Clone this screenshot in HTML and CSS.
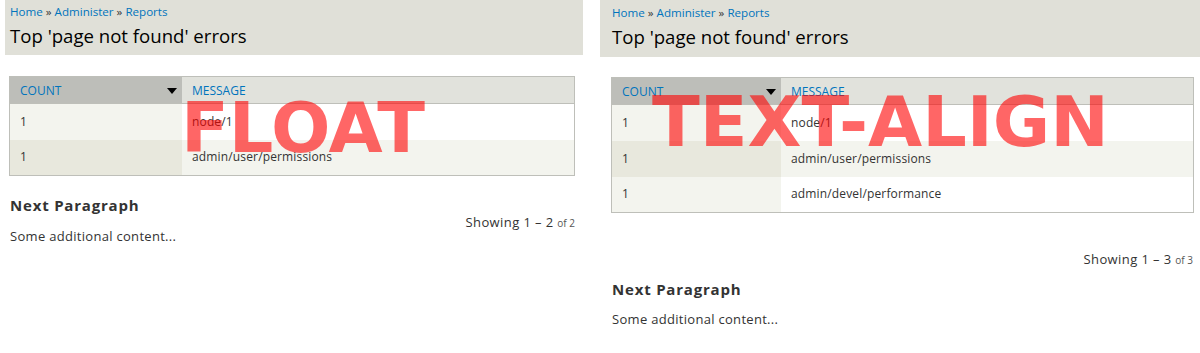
FILE: index.html
```html
<!DOCTYPE html>
<html lang="en">
<head>
    <meta charset="UTF-8">
    <meta name="viewport" content="width=device-width, initial-scale=1.0">
    <title>Top 'page not found' errors</title>
    <link rel="stylesheet" href="styles.css">
</head>
<body>
    <div class="shots">

        <!-- float version -->
        <div class="shot shot-float">
            <div class="page-header">
                <div class="breadcrumb"><a href="#">Home</a> » <a href="#">Administer</a> » <a href="#">Reports</a></div>
                <h1>Top 'page not found' errors</h1>
            </div>

            <table class="report">
                <thead>
                    <tr>
                        <th class="active"><a href="#">COUNT</a>
                            <svg class="sort" width="10" height="6" viewBox="0 0 10 6"><path d="M0 0h10L5 6z"/></svg>
                        </th>
                        <th><a href="#">MESSAGE</a></th>
                    </tr>
                </thead>
                <tbody>
                    <tr class="odd"><td class="active">1</td><td>node/1</td></tr>
                    <tr class="even"><td class="active">1</td><td>admin/user/permissions</td></tr>
                </tbody>
            </table>

            <div class="after">
                <div class="pager pager-float">Showing 1 – 2 <small>of 2</small></div>
                <h3>Next Paragraph</h3>
                <p>Some additional content...</p>
            </div>

            <div class="label label-float">FLOAT</div>
        </div>

        <!-- text-align version -->
        <div class="shot shot-align">
            <div class="page-header">
                <div class="breadcrumb"><a href="#">Home</a> » <a href="#">Administer</a> » <a href="#">Reports</a></div>
                <h1>Top 'page not found' errors</h1>
            </div>

            <table class="report">
                <thead>
                    <tr>
                        <th class="active"><a href="#">COUNT</a>
                            <svg class="sort" width="10" height="6" viewBox="0 0 10 6"><path d="M0 0h10L5 6z"/></svg>
                        </th>
                        <th><a href="#">MESSAGE</a></th>
                    </tr>
                </thead>
                <tbody>
                    <tr class="odd"><td class="active">1</td><td>node/1</td></tr>
                    <tr class="even"><td class="active">1</td><td>admin/user/permissions</td></tr>
                    <tr class="odd"><td class="active">1</td><td>admin/devel/performance</td></tr>
                </tbody>
            </table>

            <div class="pager pager-align">Showing 1 – 3 <small>of 3</small></div>
            <h3>Next Paragraph</h3>
            <p>Some additional content...</p>

            <div class="label label-align">TEXT-ALIGN</div>
        </div>

    </div>
</body>
</html>
```

FILE: styles.css
```css
body {
    margin: 0;
    font-family: 'Open Sans', 'Noto Sans', sans-serif;
    font-size: 13px;
    color: #333;
    background: #fff;
}

a {
    color: #0074bd;
    text-decoration: none;
}

.shots {
    display: flex;
    align-items: flex-start;
}

.shot {
    position: relative;
    height: 353px;
}

.shot-float {
    width: 600px;
}

.shot-align {
    flex: 1;
}

/* header */
.page-header {
    background: #e0e0d8;
    box-sizing: border-box;
}

.shot-float .page-header {
    margin-left: 5px;
    width: 578px;
    height: 55px;
    padding: 3px 5px 0;
}

.shot-align .page-header {
    width: 600px;
    height: 57px;
    padding: 4px 12px 0;
}

.breadcrumb {
    font-size: 11.6px;
    line-height: 17px;
}

h1 {
    margin: 0;
    font-size: 18.6px;
    font-weight: normal;
    line-height: 31px;
    color: #000;
}

.shot-float h1 {
    line-height: 32px;
}

/* table */
.report {
    border-collapse: collapse;
    border: 1px solid #bebfb9;
    margin-top: 21px;
}

.shot-align .report {
    margin-top: 20px;
}

.shot-float .report {
    margin-left: 9px;
    width: 566px;
}

.shot-align .report {
    margin-left: 11px;
    width: 583px;
}

.report th {
    background: #e1e2dc;
    border-bottom: 1px solid #bebfb9;
    text-align: left;
    font-weight: normal;
    font-size: 12px;
    height: 26px;
    padding: 0 10px;
}

.report th.active {
    background: #bdbeb9;
    position: relative;
}

.shot-float .report th.active {
    width: 152px;
}

.shot-align .report th.active {
    width: 149px;
}

.sort {
    position: absolute;
    right: 5px;
    top: 11px;
}

.report td {
    font-size: 12px;
    letter-spacing: 0.15px;
    height: 36px;
    padding: 0 10px 1px;
    box-sizing: border-box;
}

.report tr.odd td {
    background: #fff;
}

.report tr.even td {
    background: #f3f4ee;
}

.report tr.odd td.active {
    background: #f3f4ee;
}

.report tr.even td.active {
    background: #e8e8dd;
}

/* after table */
.after {
    padding: 19px 10px 0;
    width: 565px;
}

.pager {
    font-size: 13px;
    letter-spacing: 0.4px;
    line-height: 16px;
    color: #333;
}

.pager small {
    font-size: 10px;
    letter-spacing: 0;
    color: #555;
}

.pager-float {
    float: right;
    margin-top: 19px;
}

.pager-align {
    text-align: right;
    width: 593px;
    margin-top: 38px;
}

h3 {
    margin: 0;
    font-size: 15px;
    font-weight: bold;
    letter-spacing: 0.8px;
    line-height: 20px;
    color: #333;
}

p {
    margin: 11px 0 0;
    line-height: 20px;
    letter-spacing: 0.3px;
}

.shot-align h3 {
    margin: 11px 0 0 12px;
}

.shot-align p {
    margin: 10px 0 0 12px;
}

/* annotation labels */
.label {
    position: absolute;
    font-family: 'DejaVu Sans', sans-serif;
    font-weight: bold;
    font-size: 70px;
    line-height: 70px;
    color: rgba(255, 0, 0, 0.6);
    white-space: nowrap;
}

.label-float {
    left: 181px;
    top: 93px;
}

.label-align {
    left: 52px;
    top: 87px;
}
```
